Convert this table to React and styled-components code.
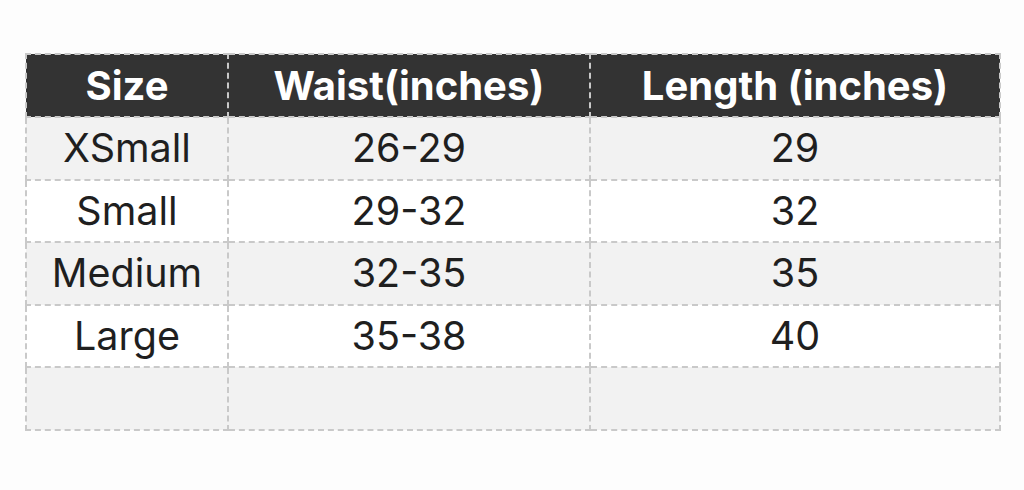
import React from "react";
import styled, { createGlobalStyle } from "styled-components";

const rows = [
  ["XSmall", "26-29", "29"],
  ["Small", "29-32", "32"],
  ["Medium", "32-35", "35"],
  ["Large", "35-38", "40"],
  ["", "", ""],
];

const GlobalStyle = createGlobalStyle`
  body {
    margin: 0;
    background: #fdfdfd;
    font-family: Inter, "Liberation Sans", sans-serif;
  }
`;

const Page = styled.div`
  padding: 53px 25px 0 25px;
`;

const SizeTable = styled.table`
  width: 974px;
  border-collapse: collapse;
  table-layout: fixed;
  color: #1f1f1f;
`;

const HeadCell = styled.th`
  height: 61px;
  padding: 0;
  background: #333333;
  color: #ffffff;
  font-size: 40px;
  font-weight: 700;
  text-align: center;
  border: 2px dashed #c9c9c9;
  white-space: nowrap;
`;

const Row = styled.tr`
  background: ${(p) => (p.$shaded ? "#f2f2f2" : "#ffffff")};
`;

const Cell = styled.td`
  height: 60.6px;
  padding: 0;
  font-size: 39.5px;
  font-weight: 400;
  text-align: center;
  border: 2px dashed #c9c9c9;
`;

export default function App() {
  return (
    <>
      <GlobalStyle />
      <Page>
        <SizeTable>
          <colgroup>
            <col style={{ width: "202px" }} />
            <col style={{ width: "362px" }} />
            <col style={{ width: "410px" }} />
          </colgroup>
          <thead>
            <tr>
              <HeadCell>Size</HeadCell>
              <HeadCell>Waist(inches)</HeadCell>
              <HeadCell>Length (inches)</HeadCell>
            </tr>
          </thead>
          <tbody>
            {rows.map((r, i) => (
              <Row key={i} $shaded={i % 2 === 0}>
                {r.map((c, j) => (
                  <Cell key={j}>{c}</Cell>
                ))}
              </Row>
            ))}
          </tbody>
        </SizeTable>
      </Page>
    </>
  );
}
